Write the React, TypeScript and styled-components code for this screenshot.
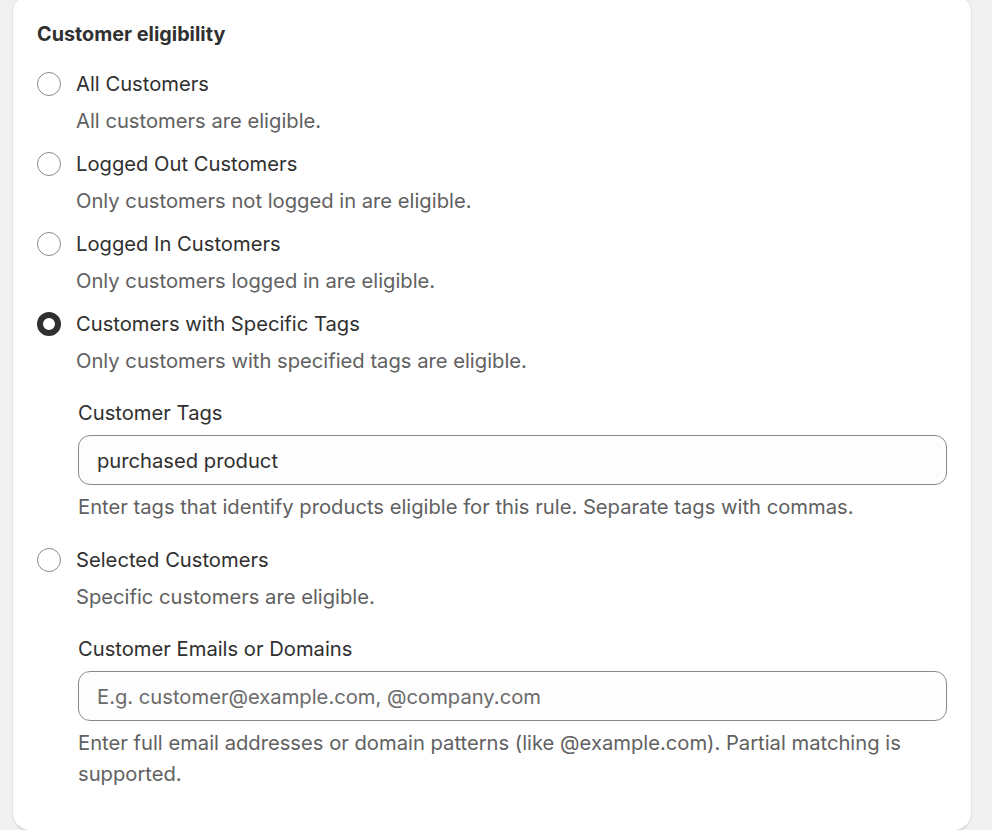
import React, { FC, useState } from "react";
import styled, { createGlobalStyle } from "styled-components";

const GlobalStyle = createGlobalStyle`
  html, body {
    margin: 0;
    padding: 0;
    background: #f1f1f1;
    font-family: Inter, "Noto Sans", "Liberation Sans", sans-serif;
    -webkit-font-smoothing: antialiased;
  }
`;

const Page = styled.div`
  padding: 0 20px 0 12px;
  height: 830px;
  overflow: hidden;
`;

const Card = styled.div`
  margin-top: -6px;
  background: #fff;
  border: 1px solid #e3e3e3;
  border-bottom-color: #d0d0d0;
  border-radius: 18px;
  box-shadow: 0 1px 0 rgba(26, 26, 26, 0.07);
  padding: 24px 24px 31px 24px;
`;

const Title = styled.h2`
  margin: 0 0 20px;
  font-size: 19.8px;
  line-height: 30px;
  font-weight: 650;
  color: #303030;
`;

const Options = styled.div`
  display: flex;
  flex-direction: column;
  gap: 13px;
`;

const Option = styled.div``;

const OptionRow = styled.label`
  display: flex;
  align-items: center;
  gap: 15px;
  cursor: pointer;
  font-size: 20.2px;
  line-height: 30px;
  color: #303030;
`;

const Radio = styled.span<{ $checked: boolean }>`
  box-sizing: border-box;
  width: 24px;
  height: 24px;
  border-radius: 50%;
  background: #fff;
  border: ${p => (p.$checked ? "6.5px solid #303030" : "1.5px solid #8a8a8a")};
  flex-shrink: 0;
`;

const Description = styled.div`
  margin: 7px 0 0 39px;
  font-size: 20.2px;
  line-height: 30px;
  color: #616161;
`;

const Nested = styled.div`
  margin: 22px 0 0 41px;
  padding-bottom: 10px;
`;

const FieldLabel = styled.div`
  font-size: 20.2px;
  line-height: 30px;
  color: #303030;
  margin-bottom: 7px;
`;

const Input = styled.input`
  box-sizing: border-box;
  width: 100%;
  height: 50px;
  border: 1px solid #8a8a8a;
  border-radius: 12px;
  background: #fdfdfd;
  padding: 0 18px;
  font-family: inherit;
  font-size: 20.2px;
  color: #303030;
  outline: none;
  &::placeholder {
    color: #6b6b6b;
  }
`;

const Help = styled.div`
  margin-top: 6px;
  font-size: 20.2px;
  line-height: 31px;
  color: #616161;
`;

type Choice = {
  id: string;
  label: string;
  description: string;
  field?: { label: string; value?: string; placeholder?: string; help: string };
};

const choices: Choice[] = [
  { id: "all", label: "All Customers", description: "All customers are eligible." },
  { id: "out", label: "Logged Out Customers", description: "Only customers not logged in are eligible." },
  { id: "in", label: "Logged In Customers", description: "Only customers logged in are eligible." },
  {
    id: "tags",
    label: "Customers with Specific Tags",
    description: "Only customers with specified tags are eligible.",
    field: {
      label: "Customer Tags",
      value: "purchased product",
      help: "Enter tags that identify products eligible for this rule. Separate tags with commas.",
    },
  },
  {
    id: "selected",
    label: "Selected Customers",
    description: "Specific customers are eligible.",
    field: {
      label: "Customer Emails or Domains",
      placeholder: "E.g. customer@example.com, @company.com",
      help: "Enter full email addresses or domain patterns (like @example.com). Partial matching is supported.",
    },
  },
];

const App: FC = () => {
  const [selected, setSelected] = useState("tags");

  return (
    <>
      <GlobalStyle />
      <Page>
        <Card>
          <Title>Customer eligibility</Title>
          <Options>
            {choices.map(choice => (
              <Option key={choice.id}>
                <OptionRow onClick={() => setSelected(choice.id)}>
                  <Radio $checked={selected === choice.id} />
                  {choice.label}
                </OptionRow>
                <Description>{choice.description}</Description>
                {choice.field && (
                  <Nested>
                    <FieldLabel>{choice.field.label}</FieldLabel>
                    <Input defaultValue={choice.field.value} placeholder={choice.field.placeholder} />
                    <Help>{choice.field.help}</Help>
                  </Nested>
                )}
              </Option>
            ))}
          </Options>
        </Card>
      </Page>
    </>
  );
};

export default App;
